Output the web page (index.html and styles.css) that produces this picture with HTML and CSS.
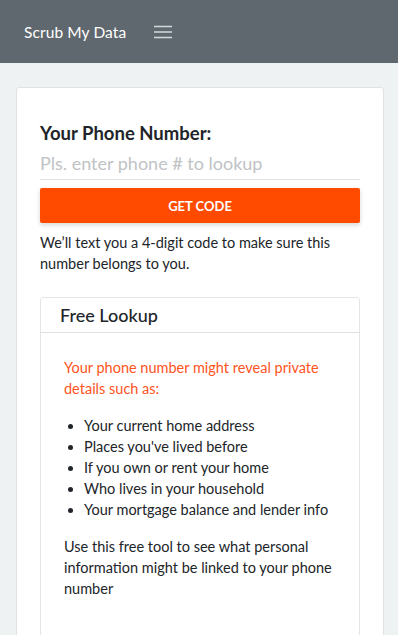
FILE: index.html
```html
<!DOCTYPE html>
<html lang="en">
<head>
<meta charset="utf-8">
<title>Scrub My Data</title>
<link rel="stylesheet" href="styles.css">
</head>
<body>
<header class="navbar">
  <span class="brand">Scrub My Data</span>
  <button class="toggler" aria-label="Menu">
    <svg width="18" height="14" viewBox="0 0 18 14"><path d="M0 1.5h18M0 7h18M0 12.5h18" stroke="#d3dadd" stroke-width="1.6" fill="none"/></svg>
  </button>
</header>
<main class="page">
  <section class="card">
    <label class="label" for="phone">Your Phone Number:</label>
    <input id="phone" class="phone-input" type="tel" placeholder="Pls. enter phone # to lookup">
    <button class="btn">GET CODE</button>
    <p class="hint">We’ll text you a 4-digit code to make sure this number belongs to you.</p>
    <div class="inner">
      <div class="inner-head">Free Lookup</div>
      <div class="inner-body">
        <p class="warn">Your phone number might reveal private details such as:</p>
        <ul class="list">
          <li>Your current home address</li>
          <li>Places you've lived before</li>
          <li>If you own or rent your home</li>
          <li>Who lives in your household</li>
          <li>Your mortgage balance and lender info</li>
        </ul>
        <p class="note">Use this free tool to see what personal information might be linked to your phone number</p>
      </div>
    </div>
  </section>
</main>
</body>
</html>
```
FILE: styles.css
```css
* { box-sizing: border-box; }
html, body { margin: 0; padding: 0; }
body {
  background: #eff2f3;
  font-family: Lato, "Open Sans", sans-serif;
  color: #212529;
  height: 635px;
  overflow: hidden;
}
.navbar {
  height: 63px;
  background: #5f686e;
  display: flex;
  align-items: center;
  padding: 0 24px;
  gap: 28px;
}
.brand {
  color: #fff;
  font-size: 15.5px;
  letter-spacing: 0.1px;
}
.toggler {
  background: none;
  border: 0;
  padding: 0;
  display: flex;
  margin-top: 1px;
}
.page {
  padding: 24px 14px 0 16px;
}
.card {
  background: #fff;
  border: 1px solid #dfe3e6;
  border-radius: 3px;
  padding: 33px 23px 0 23px;
  display: flex;
  flex-direction: column;
  min-height: 560px;
}
.label {
  font-size: 18.5px;
  font-weight: 700;
  line-height: 24px;
}
.phone-input {
  border: 0;
  border-bottom: 1px solid #dee2e6;
  font-family: inherit;
  font-size: 18px;
  padding: 6px 0 4px;
  line-height: 24px;
  outline: none;
  margin-bottom: 8px;
  color: #212529;
}
.phone-input::placeholder { color: #c0c3c6; }
.btn {
  height: 35px;
  background: #ff4b00;
  color: #fff;
  border: 0;
  border-radius: 2px;
  font-family: inherit;
  font-weight: 700;
  font-size: 13px;
  box-shadow: 0 2px 5px rgba(0,0,0,0.16);
}
.hint {
  font-size: 14.5px;
  line-height: 21px;
  margin: 9px 0 0;
}
.inner {
  margin-top: 23px;
  border: 1px solid #e3e6e9;
  border-radius: 3px;
  flex: 1;
}
.inner-head {
  font-size: 18px;
  font-weight: 500;
  line-height: 34px;
  padding: 0 19px;
  border-bottom: 1px solid #dfe2e5;
}
.inner-body {
  padding: 24px 23px;
}
.warn {
  color: #ff5322;
  font-size: 14.5px;
  line-height: 21px;
  margin: 0 0 16px;
}
.list {
  margin: 0 0 16px;
  padding-left: 20px;
  font-size: 14.5px;
  line-height: 21px;
}
.note {
  font-size: 14.5px;
  line-height: 21px;
  margin: 0;
}
```
